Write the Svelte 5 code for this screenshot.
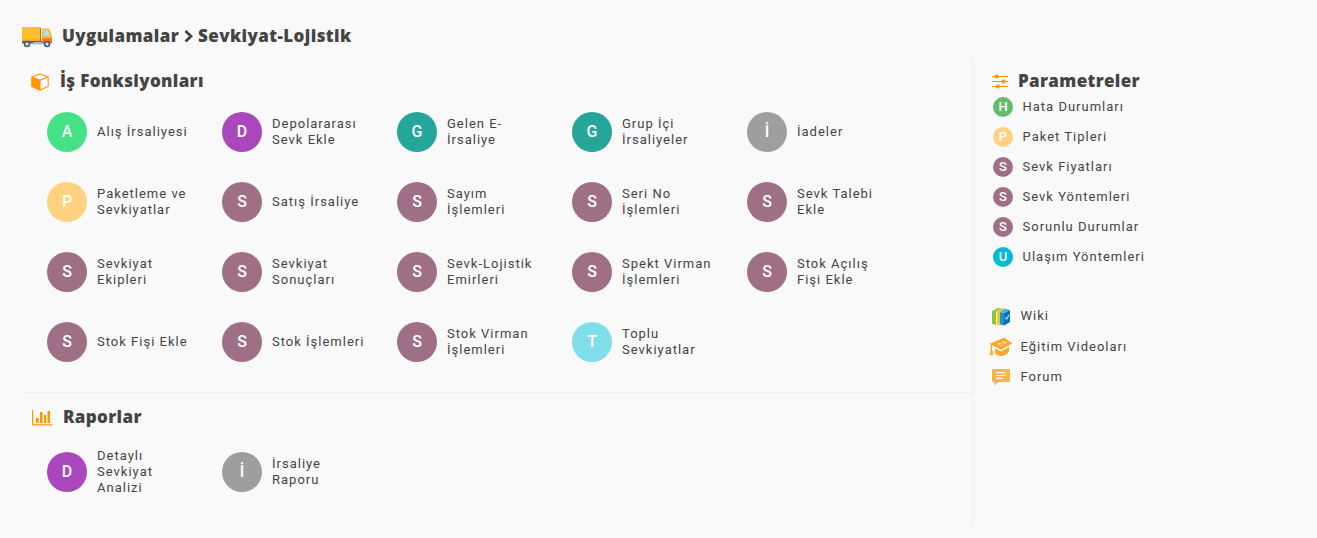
<script lang="ts">
	type Item = { letter: string; label: string; color: string };

	const plum = '#9f6f85';

	const functions: Item[] = [
		{ letter: 'A', label: 'Alış İrsaliyesi', color: '#45e285' },
		{ letter: 'D', label: 'Depolararası Sevk Ekle', color: '#ab47bc' },
		{ letter: 'G', label: 'Gelen E-İrsaliye', color: '#26a69a' },
		{ letter: 'G', label: 'Grup İçi İrsaliyeler', color: '#26a69a' },
		{ letter: 'İ', label: 'İadeler', color: '#9e9e9e' },
		{ letter: 'P', label: 'Paketleme ve Sevkiyatlar', color: '#ffd180' },
		{ letter: 'S', label: 'Satış İrsaliye', color: plum },
		{ letter: 'S', label: 'Sayım İşlemleri', color: plum },
		{ letter: 'S', label: 'Seri No İşlemleri', color: plum },
		{ letter: 'S', label: 'Sevk Talebi Ekle', color: plum },
		{ letter: 'S', label: 'Sevkiyat Ekipleri', color: plum },
		{ letter: 'S', label: 'Sevkiyat Sonuçları', color: plum },
		{ letter: 'S', label: 'Sevk-Lojistik Emirleri', color: plum },
		{ letter: 'S', label: 'Spekt Virman İşlemleri', color: plum },
		{ letter: 'S', label: 'Stok Açılış Fişi Ekle', color: plum },
		{ letter: 'S', label: 'Stok Fişi Ekle', color: plum },
		{ letter: 'S', label: 'Stok İşlemleri', color: plum },
		{ letter: 'S', label: 'Stok Virman İşlemleri', color: plum },
		{ letter: 'T', label: 'Toplu Sevkiyatlar', color: '#80deea' }
	];

	const reports: Item[] = [
		{ letter: 'D', label: 'Detaylı Sevkiyat Analizi', color: '#ab47bc' },
		{ letter: 'İ', label: 'İrsaliye Raporu', color: '#9e9e9e' }
	];

	const params: Item[] = [
		{ letter: 'H', label: 'Hata Durumları', color: '#66bb6a' },
		{ letter: 'P', label: 'Paket Tipleri', color: '#ffd180' },
		{ letter: 'S', label: 'Sevk Fiyatları', color: plum },
		{ letter: 'S', label: 'Sevk Yöntemleri', color: plum },
		{ letter: 'S', label: 'Sorunlu Durumlar', color: plum },
		{ letter: 'U', label: 'Ulaşım Yöntemleri', color: '#00bcd4' }
	];
</script>

{#snippet grid(items: Item[])}
	<ul class="grid">
		{#each items as item}
			<li class="item">
				<span class="avatar" style:background={item.color}>{item.letter}</span>
				<span class="label">{item.label}</span>
			</li>
		{/each}
	</ul>
{/snippet}

<div class="page">
	<header>
		<svg class="truck" width="30" height="22" viewBox="0 0 30 22">
			<path d="M0 1h18.5v14H0z" fill="#fdbf2d" />
			<path d="M0 15h29v2.5H0z" fill="#5d6479" />
			<path d="M0 13.5h18.5V15H0z" fill="#f6a623" />
			<path d="M18 2h1v15h-1z" fill="#a8772f" />
			<path d="M20 2.5h6.5q1 0 1.3 1L30 10v7H20z" fill="#fdb52d" />
			<path d="M21.5 4.3H26l1.5 5.5h-6z" fill="#a9e4f5" />
			<path d="M20 12.5h10V17H20z" fill="#f5732a" />
			<path d="M11.5 16h8v2.5h-8z" fill="#b5bacd" />
			<circle cx="5" cy="18" r="3.3" fill="#4f566b" />
			<circle cx="5" cy="18" r="1.7" fill="#d5dae8" />
			<circle cx="25" cy="18" r="3.3" fill="#4f566b" />
			<circle cx="25" cy="18" r="1.7" fill="#d5dae8" />
		</svg>
		<h1>
			<span>Uygulamalar</span>
			<svg width="9" height="14" viewBox="0 0 9 14">
				<path d="M1.5 2 7 7.2 1.5 12.4" fill="none" stroke="#444" stroke-width="2.8" />
			</svg>
			<span>Sevkiyat-Lojistik</span>
		</h1>
	</header>

	<div class="content">
		<main>
			<section class="functions">
				<div class="heading">
					<svg width="18" height="18" viewBox="0 0 18 18">
						<path d="M.6 4.2 9 7.2V17.4L.6 13.2z" fill="#ff9800" />
						<path
							d="M.8 4 9 1l8.2 3v9.2L9 17.2.8 13.2zM.8 4 9 7.2 17.2 4M9 7.2v10"
							fill="none"
							stroke="#ff9800"
							stroke-width="1.1"
							stroke-linejoin="round"
						/>
					</svg>
					<h2>İş Fonksiyonları</h2>
				</div>
				{@render grid(functions)}
			</section>
			<section class="reports">
				<div class="heading">
					<svg width="21" height="16" viewBox="0 0 21 16">
						<path d="M.6 0v14.9H20.5" fill="none" stroke="#ff9800" stroke-width="1.2" />
						<path d="M4 8h2.6v5H4zM8 2h2.6v11H8zM12 5h2.2v8H12zM15.5 1H18v12h-2.5z" fill="#ff9800" />
					</svg>
					<h2>Raporlar</h2>
				</div>
				{@render grid(reports)}
			</section>
		</main>

		<aside>
			<div class="heading">
				<svg width="16" height="15" viewBox="0 0 16 15">
					<path d="M0 2.5h16M0 7.5h16M0 12.5h16" stroke="#ff9800" stroke-width="1.2" />
					<path d="M3 .7h3.6v3.6H3zM9.7 5.7h3.6v3.6H9.7zM4 10.7h3.6v3.6H4z" fill="#ff9800" />
				</svg>
				<h2>Parametreler</h2>
			</div>
			<ul class="params">
				{#each params as item}
					<li>
						<span class="avatar small" style:background={item.color}>{item.letter}</span>
						<span>{item.label}</span>
					</li>
				{/each}
			</ul>
			<ul class="links">
				<li>
					<span class="link-icon">
						<svg width="20" height="20" viewBox="0 0 20 20">
							<path d="M1 5 7 2l3 .2L5 5.8V19l-4-1.2z" fill="#8bc34a" />
							<path d="M5 5.8 10 2.2l3 .2L9 6v13l-4-.4z" fill="#fcc21b" />
							<path d="M5 5.8h1.2v13H5z" fill="#fff3b0" />
							<path d="m9 6 4.5-3.4L19 4l-6 3z" fill="#4bb3e8" />
							<path d="m9 6 4 1v12.4L9 18.6z" fill="#1597d4" />
							<path d="m13 7 6-3v12l-6 3.4z" fill="#0c70b8" />
							<path d="m14.3 11.5 1.3 1.5L18 8.8" fill="none" stroke="#bfe4f7" stroke-width="1.1" />
						</svg>
					</span>
					<span>Wiki</span>
				</li>
				<li>
					<span class="link-icon">
						<svg width="24" height="20" viewBox="0 0 24 20">
							<path d="M.5 6.8 15 .8l8.5 5.4L12 12.8z" fill="#ffa726" />
							<path d="m6 11.2 6 3.4 8-4.8v5q-3.5 4.2-8 4.2T6 16z" fill="#ffa726" />
							<path d="M2.4 7v7" stroke="#ffa726" stroke-width="1.3" />
							<path d="M1.5 13h2l.7 5.2H1z" fill="#ffa726" />
							<path d="m9 6.8 3.5-.6 1.5-2 3.5 1.6-3.5.9-1.5 2z" fill="none" stroke="#fff3dd" stroke-width=".8" />
							<path d="m6 10.7 6 3 8-4.3" fill="none" stroke="#f9f9f9" stroke-width=".8" />
						</svg>
					</span>
					<span>Eğitim Videoları</span>
				</li>
				<li>
					<span class="link-icon">
						<svg width="20" height="20" viewBox="0 0 20 20">
							<path d="M2 2h16q1 0 1 1v11q0 1-1 1H7.5L3.5 18.5V15H2q-1 0-1-1V3q0-1 1-1z" fill="#f9b54c" />
							<path d="M5 5.6h9.5M5 8.5h9.5M5 11.3h6.5" stroke="#fff" stroke-width="1.2" />
						</svg>
					</span>
					<span>Forum</span>
				</li>
			</ul>
		</aside>
	</div>
</div>

<style>
	:global(body) {
		background: #f9f9f9;
	}

	.page {
		box-sizing: border-box;
		height: 538px;
		padding: 15px 22px 13px;
		font-family: Roboto, sans-serif;
		font-size: 13px;
		line-height: 16px;
		letter-spacing: 1px;
		color: #444;
	}

	svg {
		display: block;
		flex: none;
	}

	h1,
	h2 {
		margin: 0;
		font-family: 'Baloo', 'Open Sans', sans-serif;
		font-size: 17px;
		font-weight: 800;
		line-height: 30px;
		letter-spacing: 0.35px;
		white-space: nowrap;
	}

	header {
		display: flex;
		align-items: center;
		height: 42px;
		gap: 10px;
	}

	.truck {
		margin-top: 2px;
	}

	h1 {
		display: flex;
		align-items: center;
		gap: 5px;
		margin-top: -1px;
		letter-spacing: 0.4px;
	}

	ul {
		margin: 0;
		padding: 0;
		list-style: none;
	}

	.content {
		display: flex;
		height: 468px;
	}

	main {
		width: 950px;
		border-right: 1px solid #eee;
	}

	.functions {
		box-sizing: border-box;
		height: 336px;
		border-bottom: 1px solid #eee;
	}

	.heading {
		display: flex;
		align-items: center;
		height: 40px;
		padding: 7px 0 0 9px;
		box-sizing: border-box;
	}

	.heading svg {
		margin: 2px 10px 0 0;
	}

	.functions .heading svg {
		margin-right: 11px;
	}

	.reports .heading {
		height: 44px;
		padding: 3px 0 0 10px;
	}

	.grid {
		display: grid;
		grid-template-columns: repeat(5, 175px);
		grid-auto-rows: 70px;
		padding-left: 25px;
	}

	.item {
		display: flex;
		align-items: center;
		gap: 10px;
	}

	.label {
		width: 95px;
	}

	.avatar {
		display: flex;
		flex: none;
		align-items: center;
		justify-content: center;
		width: 40px;
		height: 40px;
		border-radius: 50%;
		color: #fff;
		font-size: 16px;
		font-weight: 500;
		letter-spacing: 0;
	}

	.avatar.small {
		width: 20px;
		height: 20px;
		font-size: 13px;
	}

	aside {
		padding-left: 10px;
	}

	.params {
		padding: 0 0 0 10px;
		margin-top: -5px;
	}

	.params li {
		display: flex;
		align-items: center;
		height: 30px;
		gap: 9.5px;
	}

	.links {
		margin-top: 29px;
		padding-left: 6px;
	}

	.links li {
		display: flex;
		align-items: center;
		height: 30.5px;
		gap: 7.5px;
	}

	.link-icon {
		display: flex;
		justify-content: center;
		width: 24px;
	}
</style>
